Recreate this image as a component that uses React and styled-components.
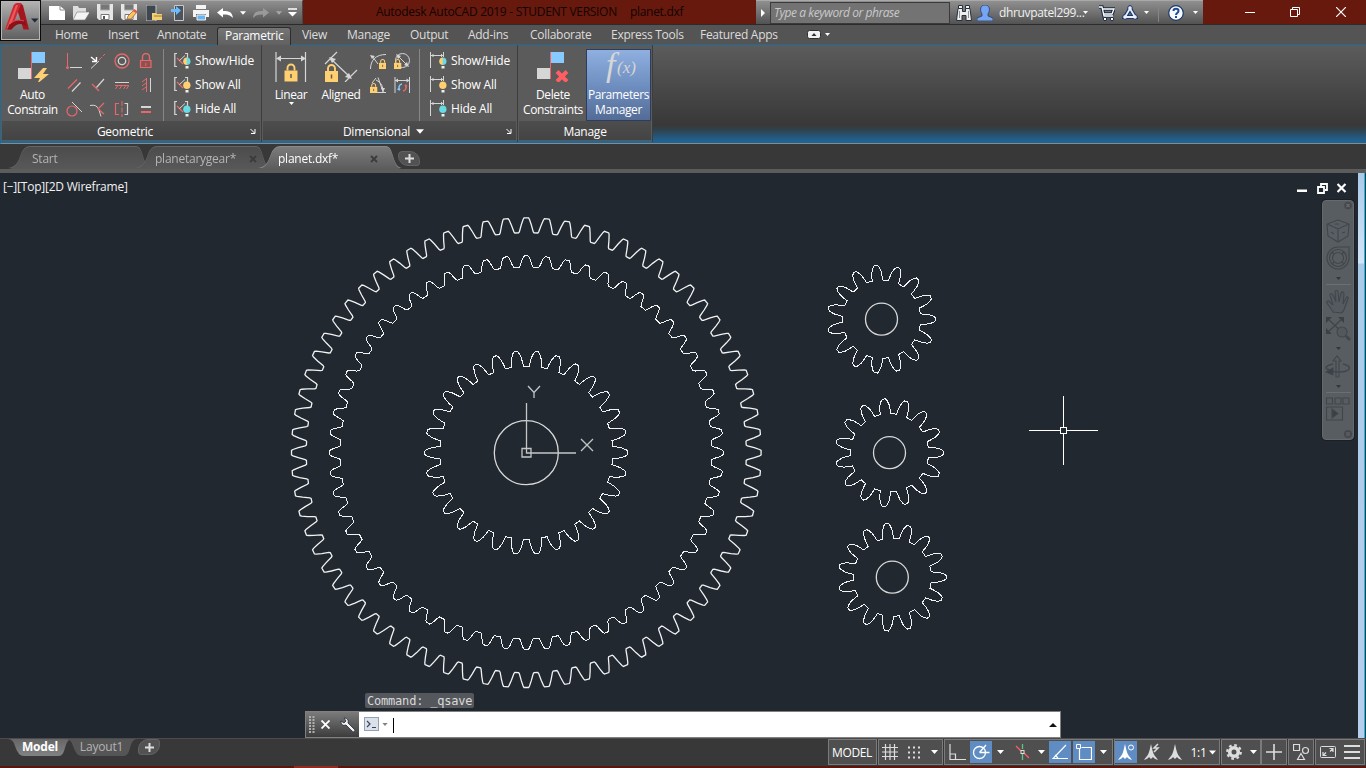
import React from "react";
import styled, { createGlobalStyle, css } from "styled-components";

const Global = createGlobalStyle`
  html, body { margin: 0; padding: 0; background: #383838; }
  * { box-sizing: border-box; }
  body { font-family: "Open Sans", "Noto Sans", sans-serif; font-size: 12px; letter-spacing: -0.35px; color: #f0f0f0; overflow: hidden; }
  svg { display: block; flex: none; }
`;

const Screen = styled.div`
  width: 1366px;
  height: 768px;
  display: flex;
  flex-direction: column;
  background: #383838;
  overflow: hidden;
  white-space: nowrap;
`;

/* ---------- title bar ---------- */
const TitleBar = styled.header`
  height: 25px;
  display: flex;
  background: #68190d;
  border-bottom: 1px solid #2b2b2b;
`;
const steel = css`
  background: linear-gradient(#8f8f8f, #757575 45%, #525252);
  border-top: 1px solid #a9a9a9;
`;
const AppButton = styled.div`
  position: relative;
  z-index: 2;
  width: 41px;
  height: 41px;
  flex: none;
  border: 1px solid #0b0b0b;
  box-shadow: inset 0 0 0 1px #b5b5b5;
  background: linear-gradient(#b4b4b4, #8b8b8b 45%, #5e5e5e);
`;
const QuickAccess = styled.div`
  ${steel}
  width: 262px;
  height: 24px;
  display: flex;
  align-items: center;
  padding-left: 8px;
  border-right: 1px solid #474747;
`;
const Slot = styled.span`
  width: ${(p) => p.$w}px;
  display: flex;
  flex: none;
  align-items: center;
  justify-content: ${(p) => p.$align || "flex-start"};
`;
const Title = styled.div`
  width: 453px;
  padding-left: 73px;
  color: #120403;
  line-height: 23px;
  letter-spacing: -0.29px;
  display: flex;
  gap: 13px;
`;
const InfoCenter = styled.div`
  ${steel}
  width: 447px;
  height: 24px;
  display: flex;
  align-items: center;
`;
const Search = styled.div`
  width: 180px;
  height: 22px;
  flex: none;
  border: 1px solid #3a3a3a;
  background: #737373;
  color: #c9c9c9;
  font-style: italic;
  line-height: 19px;
  padding-left: 3px;
  letter-spacing: -0.45px;
`;
const WindowButtons = styled.div`
  flex: 1;
  display: flex;
  align-items: center;
  padding: 0 0 1px 42px;
`;
const Divider = styled.span`
  width: 1px;
  height: ${(p) => p.$h}px;
  background: #858585;
  flex: none;
`;

/* ---------- ribbon ---------- */
const TabRow = styled.nav`
  height: 20px;
  display: flex;
  background: #545454;
  border-bottom: 1px solid #1f6a96;
  padding-left: 47px;
`;
const RibbonTab = styled.div`
  width: ${(p) => p.$w}px;
  padding-left: 8px;
  line-height: 20px;
  height: 19px;
  color: #dcdcdc;
  flex: none;
  letter-spacing: -0.28px;
  ${(p) =>
    p.$on &&
    css`
      color: #fff;
      margin: 2px 3px 0 7px;
      padding-left: 7px;
      height: 18px;
      line-height: 15px;
      background: linear-gradient(#757575, #606060);
      border: 1px solid #2c2c2c;
      border-bottom: 0;
      border-radius: 3px 3px 0 0;
    `}
`;
const Ribbon = styled.section`
  height: 99px;
  display: flex;
  background: linear-gradient(#5c5c5c, #383838 82%, #2f4350 87%, #1f6394 98%);
  border-bottom: 1px solid #8a8a8a;
  border-left: 1px solid #1f6a96;
`;
const Panel = styled.div`
  width: ${(p) => p.$w}px;
  display: flex;
  flex-direction: column;
  padding-bottom: 1px;
  background: #5b5b5b;
  border-right: 1px solid #3d3d3d;
  border-bottom: 2px solid #1c6a9c;
`;
const PanelBody = styled.div`
  height: 79px;
  display: flex;
  padding-top: 4px;
`;
const PanelTitle = styled.div`
  flex: 1;
  margin: 0 1px;
  padding: 2px ${(p) => (p.$corner ? 12 : 0)}px 0 0;
  display: flex;
  align-items: center;
  justify-content: center;
  position: relative;
  color: #fff;
  background: linear-gradient(#4d4d4d, #444);
  letter-spacing: -0.25px;
`;
const Launcher = styled.span`
  position: absolute;
  right: 4px;
  top: 7px;
`;
const BigButton = styled.div`
  width: ${(p) => p.$w}px;
  height: 72px;
  margin-left: ${(p) => p.$ml || 0}px;
  display: flex;
  flex-direction: column;
  align-items: center;
  color: #fff;
  line-height: 15px;
  text-align: center;
  flex: none;
  ${(p) =>
    p.$on &&
    css`
      background: linear-gradient(#8fb0e0, #6f8fc0 50%, #536b95);
      box-shadow: inset 0 0 0 1px #2c3d60;
    `}
`;
const BigLabel = styled.span`
  margin-top: 5px;
  letter-spacing: -0.38px;
`;
const IconGrid = styled.div`
  display: grid;
  grid-template-columns: repeat(${(p) => p.$cols}, 24px);
  grid-auto-rows: 24px;
  place-items: center;
  align-content: start;
  margin-left: ${(p) => p.$ml}px;
`;
const PanelDivider = styled.div`
  width: 1px;
  height: 72px;
  background: #878787;
  margin: 0 10px 0 ${(p) => p.$ml}px;
`;
const VisibilityRow = styled.div`
  height: 24px;
  display: flex;
  align-items: center;
  gap: 4px;
  color: #fff;
  padding-bottom: 2px;
  letter-spacing: -0.2px;
`;

/* ---------- document tabs ---------- */
const FileTabs = styled.div`
  height: 29px;
  display: flex;
  align-items: flex-end;
  background: #383838;
  border-bottom: 4px solid #5c5c5c;
`;
const FileTab = styled.div`
  position: relative;
  z-index: ${(p) => (p.$on ? 2 : 1)};
  width: ${(p) => p.$w}px;
  height: 22px;
  margin-left: ${(p) => p.$ml}px;
  padding: 1px ${(p) => p.$pr || 10}px 0 ${(p) => p.$pl}px;
  display: flex;
  align-items: center;
  justify-content: space-between;
  flex: none;
  color: ${(p) => (p.$on ? "#fff" : "#b4b4b4")};
  letter-spacing: -0.24px;
  filter: drop-shadow(0 -1px 0 ${(p) => (p.$on ? "#8b8b8b" : "#636363")});
  &::before {
    content: "";
    position: absolute;
    z-index: -1;
    inset: 0;
    background: ${(p) => (p.$on ? "linear-gradient(#7b7b7b, #5c5c5c)" : "linear-gradient(#4c4c4c, #585858)")};
    clip-path: path("${(p) =>
      `M0 22 C8 21 10 16 13 8 Q16 0 22 0 L${p.$w - 16} 0 Q${p.$w - 12} 0 ${p.$w - 10} 7 C${p.$w - 7} 16 ${p.$w - 6} 21 ${p.$w} 22 Z`}");
  }
`;
const PlusTab = styled.div`
  width: 22px;
  height: ${(p) => p.$h}px;
  margin: ${(p) => p.$m};
  display: grid;
  place-items: center;
  flex: none;
  background: #525252;
  border: 1px solid #626262;
  border-radius: ${(p) => p.$r};
`;

/* ---------- drawing area ---------- */
const Workspace = styled.main`
  position: relative;
  height: 565px;
  background: #212830;
`;
const Drawing = styled.svg`
  position: absolute;
  left: 0;
  top: 0;
`;
const ViewLabel = styled.div`
  position: absolute;
  left: 3px;
  top: 6px;
  line-height: 16px;
  color: #f2f2f2;
  letter-spacing: -0.22px;
`;
const ViewButtons = styled.div`
  position: absolute;
  left: 1297px;
  top: 10px;
  display: flex;
  gap: 9px;
`;
const NavBar = styled.div`
  position: absolute;
  left: 1322px;
  top: 27px;
  width: 32px;
  height: 240px;
  border-radius: 4px;
  background: #585d61;
  border: 1px solid #666a6e;
  box-shadow: 0 0 0 1px #1a1f25;
`;
const EdgeStrip = styled.div`
  position: absolute;
  left: 1358px;
  top: 0;
  width: 8px;
  height: 565px;
  background: linear-gradient(#a9cbea, #d3e5f6 90px, #a9cbea 91px, #b6cfec);
  border-right: 1px solid #2b3a42;
  box-shadow: inset -1px 0 0 #19b9e8;
`;
const History = styled.div`
  position: absolute;
  left: 365px;
  top: 520px;
  width: 109px;
  height: 15px;
  border-radius: 2px;
  background: #54585c;
  color: #dadada;
  font: 12px/16px "DejaVu Sans Mono", monospace;
  letter-spacing: -0.2px;
  padding-left: 2px;
`;
const CommandBar = styled.div`
  position: absolute;
  left: 305px;
  top: 538px;
  width: 756px;
  height: 27px;
  display: flex;
  border: 1px solid #808080;
`;
const CommandHandle = styled.div`
  width: 53px;
  display: flex;
  align-items: center;
  padding-left: 3px;
  background: linear-gradient(#7b7b7b, #3c3c3c);
`;
const CommandInput = styled.div`
  flex: 1;
  display: flex;
  align-items: center;
  background: #fff;
  padding: 0 3px 0 5px;
`;
const Caret = styled.span`
  width: 1px;
  height: 15px;
  margin: 2px auto 0 5px;
  background: #000;
`;

/* ---------- status bar ---------- */
const StatusBar = styled.footer`
  height: 28px;
  display: flex;
  background: #383838;
  border-top: 1px solid #4c4c4c;
`;
const LayoutTabs = styled.div`
  width: 828px;
  display: flex;
  align-items: flex-start;
`;
const LayoutTab = styled.div`
  position: relative;
  z-index: 1;
  width: ${(p) => p.$w}px;
  height: 17px;
  margin-left: ${(p) => p.$ml}px;
  line-height: 16px;
  text-align: center;
  color: ${(p) => (p.$on ? "#fff" : "#b4b4b4")};
  font-weight: ${(p) => (p.$on ? 700 : 400)};
  letter-spacing: -0.2px;
  &::before {
    content: "";
    position: absolute;
    z-index: -1;
    inset: 0;
    background: ${(p) => (p.$on ? "linear-gradient(#666, #828282)" : "#555")};
    clip-path: path("${(p) => `M0 0 Q5 0 7 7 Q10 17 16 17 L${p.$w - 13} 17 Q${p.$w - 9} 17 ${p.$w - 7} 9 Q${p.$w - 5} 0 ${p.$w} 0 Z`}");
  }
`;
const Group = styled.div`
  width: ${(p) => p.$w}px;
  height: 26px;
  display: flex;
  align-items: center;
  flex: none;
  margin-right: ${(p) => p.$mr ?? 1}px;
  background: #4f4f4f;
  border: 1px solid #7b7b7b;
  color: #fff;
  padding-left: ${(p) => p.$pl || 0}px;
`;
const Toggle = styled.span`
  width: ${(p) => p.$w || 22}px;
  height: 22px;
  margin-left: ${(p) => p.$ml || 0}px;
  display: grid;
  place-items: center;
  flex: none;
  background: ${(p) => (p.$on ? "#5f8dc3" : "transparent")};
`;
const Taskbar = styled.div`
  height: 2px;
  background: linear-gradient(90deg, #5a150c 294px, #932a1e 294px, #932a1e 338px, #5a150c 338px);
`;

/* ---------- small glyphs ---------- */
const Arrow = ({ c = "#fff", w = 7, h = 4 }) => (
  <svg width={w} height={h} viewBox="0 0 7 4"><path d="M0 0h7L3.5 4z" fill={c} /></svg>
);
const Svg = ({ w = 16, h = 16, children, ...r }) => (
  <svg width={w} height={h} viewBox={`0 0 ${w} ${h}`} fill="none" {...r}>{children}</svg>
);
const R = "#e8686a";
const W = "#d6d6d6";
const Y = "#ffcf70";
const B = "#86caff";
const C = "#66dbe4";

const Lock = ({ x, y, s = 1, c = Y }) => (
  <g transform={`translate(${x} ${y}) scale(${s})`}>
    <path d="M3 6V3.500a3.500 3.500 0 0 1 7 0V6" stroke={c} strokeWidth="1.900" fill="none" />
    <path d="M0 6h13v11H0z" fill={c} />
    <path d="M6.500 9.500v4" stroke="#5b5b5b" strokeWidth="1.500" />
  </g>
);

const AutoConstrainIcon = () => (
  <Svg w={34} h={33}>
    <path d="M16 3h13v11H16z" fill={B} /><path d="M2 19h13v11H2z" fill={W} />
    <path d="M15.500 3v27" stroke={R} />
    <path d="M27 19l-9 10h6l-3 6 12-10h-6l4-6z" fill="#ffd073" />
  </Svg>
);
const DeleteConstraintsIcon = () => (
  <Svg w={34} h={33}>
    <path d="M15 3h13v11H15z" fill={B} /><path d="M1 19h13v11H1z" fill={W} />
    <path d="M14.500 3v27" stroke={R} />
    <path d="M21 22.500l10 10M31 22.500l-10 10" stroke="#ff5e62" strokeWidth="4" />
  </Svg>
);

const geometricIcons = [
  <><path d="M1.500 0v13" stroke={R} /><circle cx="1.500" cy="14.500" r="1.500" fill={R} /><path d="M4 14.500h12" stroke={W} /></>,
  <><path d="M1 15.500L9 8" stroke={W} /><path d="M9 7l6-6" stroke={R} strokeDasharray="4 1.500" /><path d="M1 4l5 4M6.500 4v4.500H2" stroke="#fff" strokeWidth="1.400" /></>,
  <><circle cx="8" cy="8" r="7" stroke={R} strokeWidth="1.300" /><circle cx="8" cy="8" r="3.700" stroke={W} strokeWidth="1.300" /></>,
  <><path d="M4.500 7V4a3.500 3.500 0 0 1 7 0v3" stroke={R} strokeWidth="1.400" /><path d="M2.500 7.500h10.500v7H2.500z" stroke={R} fill="#8b5153" strokeWidth="1.200" /><path d="M7.800 10v3" stroke={R} /></>,
  <><path d="M2 11.500L11 2.500" stroke={R} strokeWidth="1.200" /><path d="M6 14.500L14.500 5.500" stroke={W} strokeWidth="1.200" /></>,
  <><path d="M2 7l7 7" stroke={R} strokeWidth="1.300" /><path d="M6.500 10.500L14 2" stroke={W} strokeWidth="1.200" /></>,
  <><path d="M1 5.500h14" stroke={W} /><path d="M1 8.500h14M3.500 9l-2 3M7.500 9l-2 3M11.500 9l-2 3M14.500 9l-2 3" stroke={R} /></>,
  <><path d="M8.500 1v14M8 2L4 5M8 6L4 9M8 10l-4 3" stroke={R} /><path d="M12.500 1v14" stroke={W} /></>,
  <><circle cx="6" cy="10" r="5" stroke={R} strokeWidth="1.200" /><path d="M6 1l10 10" stroke={W} /></>,
  <><path d="M0 4.500Q7 3 9 9l2 6.500" stroke={W} /><path d="M14 2L8 8M8 8l6 5" stroke={R} strokeWidth="1.200" /></>,
  <><path d="M5 2.500H1.500v11H5" stroke={R} strokeWidth="1.200" /><path d="M8 0v16" stroke={R} strokeDasharray="5 1.500" /><path d="M10.500 2.500h3v11h-3" stroke={W} strokeWidth="1.200" /></>,
  <><path d="M3 6h10" stroke={W} strokeWidth="2" /><path d="M3 11h10" stroke={R} strokeWidth="2" /></>,
];

const Bulb = ({ left, right }) => (
  <>
    <path d="M13 5.500a3.800 3.800 0 0 0 0 7.600z" fill={left} />
    <path d="M12.700 5.500a3.800 3.800 0 0 1 0 7.600z" fill={right} />
    <path d="M11.500 14h3v2.500h-3z" fill="#eee" />
  </>
);
const bulbs = [[Y, C], [Y, Y], [C, C]];
const GeoVisIcon = ({ i }) => (
  <Svg w={17} h={17}>
    <path d="M3 1.500H.8v13H3M11 1.500h2.500v5" stroke={W} strokeWidth="1.200" />
    <path d="M3 6l6 6" stroke={R} strokeWidth="1.200" /><path d="M5.500 8.500L11 3.500" stroke={W} />
    <Bulb left={bulbs[i][0]} right={bulbs[i][1]} />
  </Svg>
);
const DimVisIcon = ({ i }) => (
  <Svg w={17} h={17}>
    <path d="M.5 0v16M13.500 0v5M1 3.500h12M3 2v3M11.500 2v3" stroke={W} />
    <Bulb left={bulbs[i][0]} right={bulbs[i][1]} />
  </Svg>
);

const LinearIcon = () => (
  <Svg w={32} h={33}>
    <path d="M1 3v30M30.500 3v30M2 9.500h28" stroke={W} strokeWidth="1.200" />
    <path d="M1 9.500l5-3v6zM31 9.500l-5-3v6z" fill={W} />
    <Lock x={9.500} y={15.500} />
  </Svg>
);
const AlignedIcon = () => (
  <Svg w={34} h={33}>
    <path d="M1 15L13 3M21 33l12-12M7 10l19 18" stroke={W} strokeWidth="1.200" />
    <path d="M5 8l7 2-4 4zM28 30l-7-2 4-4z" fill={W} />
    <Lock x={1} y={16} />
  </Svg>
);
const dimensionIcons = [
  <><path d="M.5 16C.5 7 6 1.500 16 1.500M2 3l6 8" stroke={W} /><path d="M0 2l5 1-3 3z" fill={W} /><Lock x={9} y={6.500} s={0.56} /></>,
  <><circle cx="8.500" cy="7.500" r="7" stroke={W} /><path d="M3 2l11 11" stroke={W} /><path d="M2 1l5 2-3 3zM15 14l-5-2 3-3z" fill={W} /><Lock x={0} y={6.500} s={0.56} /></>,
  <><path d="M2 6l4-5M6 3c6 3 7 7 7 12M4 15.500h12M8 .500l5 14" stroke={W} /><path d="M13 15l-2-4h4z" fill={W} /><Lock x={0} y={6.500} s={0.56} /></>,
  <><path d="M1 0v16M15.500 0v16M1 3.500h14" stroke={W} /><path d="M1 3.500l3-2v4zM15.500 3.500l-3-2v4z" fill={W} /><path d="M8 7a3.500 3.500 0 0 0-2 6M6 13l-2.500-1" stroke={B} strokeWidth="1.500" /><path d="M9 14a3.500 3.500 0 0 0 2-6M11 8l2 1" stroke={R} strokeWidth="1.500" /></>,
];
const FxIcon = () => (
  <Svg w={38} h={33} overflow="visible">
    <text x="6" y="27" fontFamily="Liberation Serif, serif" fontStyle="italic" fontSize="34" fill={W} letterSpacing="0">f</text>
    <text x="17" y="24" fontFamily="Liberation Serif, serif" fontStyle="italic" fontSize="17" fill={W} letterSpacing="0">(x)</text>
  </Svg>
);
const CornerIcon = () => (
  <Svg w={6} h={6}><path d="M.5 1l4 4M5 1v4.500H1" stroke="#fff" /></Svg>
);
const PlusGlyph = () => <Svg w={9} h={9}><path d="M4.500 0v9M0 4.500h9" stroke="#ddd" strokeWidth="2" /></Svg>;
const CloseGlyph = () => <Svg w={8} h={8}><path d="M1 1l6 6M7 1L1 7" stroke="#3b3b3b" strokeWidth="1.800" /></Svg>;

const AppLogo = () => (
  <Svg w={39} h={39}>
    <path d="M15 2.500h5l2 2 6 24h-5.500L16 8z" fill="#a3161f" />
    <path d="M4 28.500L12.500 4.500Q13.500 2 16 2h4.500L10 28.500z" fill="#cf2a33" />
    <path d="M6 27L15 4h2L9 27z" fill="#ea5a5c" />
    <path d="M8 24c4-5 10-6 16-4l1.500 5c-5-3-10-3-15 3.500H6.500z" fill="#8e1019" />
    <path d="M9 23c4-4 9-4.500 14-3" stroke="#dd4a4e" />
    <path d="M30 17.500h7.500l-3.750 4z" fill="#1e2a3c" />
  </Svg>
);

const Floppy = ({ pencil }) => (
  <Svg w={17} h={17}>
    <path d="M0 0h16v16H2l-2-2z" fill="#e6e6e6" /><path d="M3.500 0h9v6h-9z" fill="#777" stroke="#aaa" />
    <path d="M4 10.500h8v5H4z" fill="#fff" stroke="#777" />
    {pencil ? <path d="M6 15l1-3 6-6 3 2-6 7z" fill="#ffc35d" stroke="#8a5a3a" strokeWidth=".7" /> : <path d="M6 12h2v3H6z" fill="#555" />}
    {pencil && <path d="M12.500 6l3 2" stroke="#e4574f" strokeWidth="2.500" />}
  </Svg>
);
const quickIcons = [
  [24, <Svg><path d="M0 1h11l5 4v10H0z" fill="#fff" /><path d="M11 1v4h5" stroke="#888" /></Svg>],
  [24, <Svg><path d="M0 15V1h5l1 2h7v4H5z" fill="#dedede" /><path d="M4 7h13l-5 8H0z" fill="#f4f4f4" stroke="#777" strokeWidth=".6" /></Svg>],
  [24, <Floppy />],
  [25, <Floppy pencil />],
  [25, <Svg><path d="M0 0h10v16H0z" fill="#3e4650" stroke="#c8c8c8" /><path d="M6 8h4l1 1h5v6H6z" fill="#f3cf74" /><path d="M8 11h8" stroke="#a07c32" /></Svg>],
  [22, <Svg><path d="M3.500.5h9v15h-9z" fill="#4b535d" stroke="#c8c8c8" /><path d="M0 4h5V1l5 4.500L5 10V7H0z" fill="#6dbbff" /></Svg>],
  [24, <Svg><path d="M3 0h10v4H3zM0 5h16v7h-3V9H3v3H0z" fill="#f4f4f4" /><path d="M4 10h8.500v5H4z" fill="#65b5f4" stroke="#eee" /></Svg>],
  [23, <Svg w={17}><path d="M0 7.500L6 3v3c7 0 9 1 10 7-3-3-5-3.500-10-3.500v3z" fill="#fff" /></Svg>],
  [13, <Arrow w={6} />],
  [23, <Svg w={17}><path d="M16 7.500L10 3v3C3 6 1 7 0 13c3-3 5-3.500 10-3.500v3z" fill="#9a9a9a" /></Svg>],
  [12, <Arrow w={6} c="#aaa" />],
  [14, <Svg w={9} h={9}><path d="M0 1h9" stroke="#fff" strokeWidth="1.500" /><path d="M0 4h9L4.500 8.500z" fill="#fff" /></Svg>],
];

/* ---------- gears ---------- */
function gearPath(cx, cy, teeth, profile) {
  const pts = [];
  for (let i = 0; i < teeth; i++) {
    const a = (i * 2 * Math.PI) / teeth;
    profile.forEach(([r, half]) => pts.push([r, a - half / r]));
    [...profile].reverse().forEach(([r, half]) => pts.push([r, a + half / r]));
  }
  return "M" + pts.map(([r, a]) => `${(cx + r * Math.cos(a)).toFixed(2)} ${(cy + r * Math.sin(a)).toFixed(2)}`).join("L") + "Z";
}
const outerProfile = [[220.000, 7.700], [221.200, 6.900], [228, 5], [233.300, 3.200], [234.800, 2.300]];
const innerProfile = [[185.800, 6.900], [188.300, 5.600], [192.800, 4.200], [195.600, 2.900], [196.800, 1.800]];
const sunProfile = [[86.500, 6.200], [90.500, 5.700], [95, 4.900], [99.500, 3.200], [101.500, 1.700]];
const planetProfile = [[39.200, 5.300], [43.500, 5.100], [48, 4.600], [51.800, 3.200], [54, 1.600]];
const planets = [[881.500, 319.200], [889.500, 452.700], [892.300, 577.200]];

const GearDrawing = () => (
  <Drawing width="1358" height="565" viewBox="0 173 1358 565" fill="none" stroke="#f2f2f2" strokeWidth="1">
    <path d={gearPath(526.300, 452.700, 72, outerProfile)} strokeWidth="1.300" />
    <g shapeRendering="crispEdges">
      <path d={gearPath(526.300, 452.700, 60, innerProfile)} />
      <path d={gearPath(526.300, 452.700, 30, sunProfile)} />
      {planets.map(([x, y]) => <path key={y} d={gearPath(x, y, 15, planetProfile)} />)}
    </g>
    {planets.map(([x, y]) => <circle key={y} cx={x} cy={y} r="16" strokeWidth="1.300" stroke="#d8d8d8" />)}
    <circle cx="526.300" cy="452.700" r="32" stroke="#d8d8d8" strokeWidth="1.300" />
    <g stroke="#c4c6c8" strokeWidth="1.300">
      <path d="M526.500 403v50h49.500M522 448.500h9v8.500h-9z" />
      <path d="M528 386l6 6.500 6-6.500M534 392.500v5.500M581 439l12 12M593 439l-12 12" />
    </g>
    <path d="M1063.500 396v31M1063.500 434v31M1029 430.500h31M1067 430.500h31M1060.500 427.500h6v6h-6z" stroke="#fff" shapeRendering="crispEdges" />
  </Drawing>
);

const NavIcons = () => (
  <Svg w={30} h={238} stroke="#41464c" strokeWidth="1.100">
    <circle cx="25" cy="4.500" r="3.800" fill="#45494e" stroke="none" /><path d="M23.500 3l3 3M26.500 3l-3 3" stroke="#686c70" />
    <path d="M15 19l11 4-1 12-10 6-10-6-1-12zM4 23l11 5 11-5M15 28v13M12 23h4M8 31l3 2M19 32l3-1" fill="#595e64" />
    <path d="M15 46h11v11a11 11 0 1 1-11-11z" /><circle cx="15" cy="57" r="8.500" /><circle cx="15" cy="57" r="5.500" />
    <path d="M9 51l2 2M21 51l-2 2M9 63l2-2M21 63l-2-2" />
    <path d="M13 76h5l-2.500 3zM13 146h5l-2.500 3zM13 184h5l-2.500 3z" fill="#33383d" stroke="none" />
    <path d="M3 83.500h25M3 191.500h25" stroke="#6b6f73" strokeWidth="1" />
    <path d="M10 111c-2-4-5-7-6-9s1-3 3-1l3 3-3-10c0-2 2-2 3 0l3 7-1-10c0-2 3-2 3 0l1 10 2-9c1-2 3-1 3 1l-1 10 3-6c1-2 3-1 2 1l-3 8c-1 4-2 5-4 6z" fill="#555a61" />
    <path d="M5 118l15 14M20 117L4 132" strokeWidth="1.500" /><path d="M3 116h6l-6 6zM21 116v6l-6-6zM3 133v-6l6 6z" fill="#3b4046" stroke="none" />
    <circle cx="19" cy="131" r="5" fill="#53575e" /><path d="M23 135l4 4" strokeWidth="2.800" />
    <path d="M13 176v-16h-3l4-5 4 5h-2v16z" /><path d="M20 163c10 2 8 8-4 8-7 0-10-2-11-3M10 163c-8 2-8 4-5 6" strokeWidth="1.500" /><path d="M3 171l7-4v7z" fill="#3b4046" />
    <path d="M3.500 197h6v6h-6zM12 197h6v6h-6zM20 197h6v6h-6zM3.500 206h16v13h-16z" /><path d="M9 208v9l6-4.500z" fill="#3b4046" />
    <circle cx="25" cy="233" r="4" fill="#45494e" stroke="none" /><path d="M23 232h4M23 234h4" stroke="#686c70" />
  </Svg>
);

const Annot = ({ c = "#dcdcdc", extra }) => (
  <Svg w={18} h={18}><path d="M8 1c.8 3.500 1.500 7 2.500 9.500 1 2.300 3 4 4.500 6.500-2-.5-3.500-1.200-5-3L8 16l-2-2c-1.500 1.800-3 2.500-5 3 1.500-2.500 3.500-4.200 4.500-6.500C6.500 8 7.200 4.500 8 1z" fill={c} />{extra}</Svg>
);

const tabs = [
  ["Home", 53], ["Insert", 49], ["Annotate", 61], ["Parametric", 74, true], ["View", 45], ["Manage", 63], ["Output", 58],
  ["Add-ins", 62], ["Collaborate", 81], ["Express Tools", 89], ["Featured Apps", 115],
];

export default function App() {
  return (
    <Screen>
      <Global />
      <TitleBar>
        <AppButton><AppLogo /></AppButton>
        <QuickAccess>{quickIcons.map(([w, icon], i) => <Slot key={i} $w={w}>{icon}</Slot>)}</QuickAccess>
        <Title><span>Autodesk AutoCAD 2019 - STUDENT VERSION</span><span>planet.dxf</span></Title>
        <InfoCenter>
          <Slot $w={14} $align="center"><Svg w={4} h={8}><path d="M0 0l4 4-4 4z" fill="#fff" /></Svg></Slot>
          <Search>Type a keyword or phrase</Search>
          <Slot $w={27} $align="center"><Svg><path d="M2 3.500h4.500v3h3v-3H14l1.500 12H10v-5H6v5H.5z" fill="#eee" stroke="#26303c" /><path d="M2.500.500h4v3h-4zM9.500.500h4v3h-4z" fill="#eee" stroke="#26303c" /><path d="M3.500 6v7M12.500 6v7" stroke="#8a929c" /></Svg></Slot>
          <Slot $w={22}><Svg><path d="M5 9C2 4 4 0 8 0s6 4 3 9v2l5 2v3H0v-3l5-2z" fill="#77a5f2" stroke="#1f3f7c" strokeWidth=".8" /></Svg></Slot>
          <Slot $w={84}>dhruvpatel299...</Slot>
          <Slot $w={16}><Arrow w={5} h={3} /></Slot>
          <Slot $w={23}><Svg><path d="M0 2h3l2 9h9M4 4h11l-2 5H5" stroke="#1c2b44" strokeWidth="3.500" /><path d="M0 2h3l2 9h9M4 4h11l-2 5H5" stroke="#fff" strokeWidth="1.300" /><circle cx="6" cy="14" r="1.700" fill="#fff" stroke="#1c2b44" /><circle cx="13" cy="14" r="1.700" fill="#fff" stroke="#1c2b44" /></Svg></Slot>
          <Slot $w={22}><Svg><path d="M8 3.500L13 12H3z" stroke="#1d3769" strokeWidth="4" /><g fill="#e8f0ff" stroke="#1d3769"><circle cx="8" cy="3" r="2.300" /><circle cx="13" cy="12" r="2.300" /><circle cx="3" cy="12" r="2.300" /></g><path d="M8 3.500L13 12H3z" stroke="#e8f0ff" strokeWidth="1.800" /></Svg></Slot>
          <Slot $w={14}><Arrow w={5} h={3} /></Slot>
          <Divider $h={18} />
          <Slot $w={34} $align="center"><Svg><circle cx="8" cy="8" r="7.300" fill="#f7faff" stroke="#1d3769" strokeWidth="1.200" /><path d="M5.500 6c0-3 5-3 5 0 0 2-2.500 2-2.500 4M8 11v2" stroke="#1d4b97" strokeWidth="2" /></Svg></Slot>
          <Slot $w={9}><Arrow w={5} h={3} /></Slot>
        </InfoCenter>
        <WindowButtons>
          <Slot $w={45}><Svg w={10} h={10}><path d="M0 5.500h10" stroke="#fff" /></Svg></Slot>
          <Slot $w={46}><Svg w={10} h={10}><path d="M.5 2.500h7v7h-7zM2.500 2.500v-2h7v7h-2" stroke="#fff" /></Svg></Slot>
          <Slot $w={12}><Svg w={10} h={10}><path d="M0 0l10 10M10 0L0 10" stroke="#fff" strokeWidth="1.200" /></Svg></Slot>
        </WindowButtons>
      </TitleBar>
      <TabRow>
        {tabs.map(([t, w, on]) => <RibbonTab key={t} $w={w} $on={on}>{t}</RibbonTab>)}
        <Slot $w={18}><Svg w={14} h={9}><rect x=".5" y=".5" width="13" height="8" rx="2" fill="#f0f0f0" stroke="#303030" /><path d="M4.500 6L7 3l2.500 3z" fill="#303030" /></Svg></Slot>
        <Slot $w={8}><Arrow w={5} h={3} /></Slot>
      </TabRow>
      <Ribbon>
        <Panel $w={261}>
          <PanelBody>
            <BigButton $w={59} $ml={2}><AutoConstrainIcon /><BigLabel>Auto<br />Constrain</BigLabel></BigButton>
            <IconGrid $cols={4} $ml={0}>{geometricIcons.map((d, i) => <Svg key={i}>{d}</Svg>)}</IconGrid>
            <PanelDivider $ml={5} />
            <div>{["Show/Hide", "Show All", "Hide All"].map((t, i) => <VisibilityRow key={t}><GeoVisIcon i={i} />{t}</VisibilityRow>)}</div>
          </PanelBody>
          <PanelTitle $corner>Geometric<Launcher><CornerIcon /></Launcher></PanelTitle>
        </Panel>
        <Panel $w={256}>
          <PanelBody>
            <BigButton $w={50} $ml={4}><LinearIcon /><BigLabel>Linear</BigLabel><Slot $w={5}><Arrow w={5} h={3} /></Slot></BigButton>
            <BigButton $w={50}><AlignedIcon /><BigLabel>Aligned</BigLabel></BigButton>
            <IconGrid $cols={2} $ml={0}>{dimensionIcons.map((d, i) => <Svg key={i}>{d}</Svg>)}</IconGrid>
            <PanelDivider $ml={5} />
            <div>{["Show/Hide", "Show All", "Hide All"].map((t, i) => <VisibilityRow key={t}><DimVisIcon i={i} />{t}</VisibilityRow>)}</div>
          </PanelBody>
          <PanelTitle $corner>Dimensional<Slot $w={14} $align="flex-end"><Arrow w={8} h={5} /></Slot><Launcher><CornerIcon /></Launcher></PanelTitle>
        </Panel>
        <Panel $w={135}>
          <PanelBody>
            <BigButton $w={66} $ml={2}><DeleteConstraintsIcon /><BigLabel>Delete<br />Constraints</BigLabel></BigButton>
            <BigButton $w={65} $on><FxIcon /><BigLabel>Parameters<br />Manager</BigLabel></BigButton>
          </PanelBody>
          <PanelTitle>Manage</PanelTitle>
        </Panel>
      </Ribbon>
      <FileTabs>
        <FileTab $w={144} $ml={8} $pl={24}>Start</FileTab>
        <FileTab $w={137} $ml={-17} $pl={20} $pr={15}>planetarygear*<CloseGlyph /></FileTab>
        <FileTab $w={144} $ml={-14} $pl={20} $pr={24} $on>planet.dxf*<CloseGlyph /></FileTab>
        <PlusTab $h={15} $m="0 0 3px -4px" $r="4px 10px 3px 10px"><PlusGlyph /></PlusTab>
      </FileTabs>
      <Workspace>
        <GearDrawing />
        <ViewLabel>[−][Top][2D Wireframe]</ViewLabel>
        <ViewButtons>
          <Svg w={11} h={11}><path d="M0 6.500h10v2.500H0z" fill="#fff" /></Svg>
          <Svg w={11} h={11}><path d="M1 4h6v6H1zM4 3V1h6v6H8" stroke="#fff" strokeWidth="1.800" /></Svg>
          <Svg w={11} h={11}><path d="M.5 1l8 8M8.500 1l-8 8" stroke="#fff" strokeWidth="2.200" /></Svg>
        </ViewButtons>
        <NavBar><NavIcons /></NavBar>
        <EdgeStrip />
        <History>Command: _qsave</History>
        <CommandBar>
          <CommandHandle>
            <Slot $w={12}><Svg w={6} h={17}><path d="M1 0v17M4.500 0v17" stroke="#b0b0b0" strokeWidth="2" strokeDasharray="2 1" /></Svg></Slot>
            <Slot $w={17}><Svg w={9} h={9}><path d="M.5.5l8 8M8.500.5l-8 8" stroke="#fff" strokeWidth="1.800" /></Svg></Slot>
            <Slot $w={19} $align="center"><Svg><path d="M4 1l2 3-2 2-3-2c0 4 2 5 5 4l6 6c2 2 4 0 2-2L8 6c1-3-1-5-4-5z" fill="#f4f4f4" stroke="#222b36" strokeWidth=".8" /></Svg></Slot>
          </CommandHandle>
          <CommandInput>
            <Svg w={15} h={15}><rect x=".5" y=".5" width="14" height="13" fill="#dbe1ea" stroke="#93a0b0" /><path d="M3 4l3 3-3 3M8 10.500h4" stroke="#39465a" strokeWidth="1.200" /></Svg>
            <Slot $w={9} $align="flex-end"><Arrow w={6} h={3} c="#808080" /></Slot>
            <Caret />
            <Svg w={8} h={4}><path d="M0 4h8L4 0z" fill="#111" /></Svg>
          </CommandInput>
        </CommandBar>
      </Workspace>
      <StatusBar>
        <LayoutTabs>
          <LayoutTab $w={64} $ml={8} $on>Model</LayoutTab>
          <LayoutTab $w={71} $ml={-6}>Layout1</LayoutTab>
          <PlusTab $h={16} $m="0 0 0 1px" $r="10px 3px 10px 3px"><PlusGlyph /></PlusTab>
        </LayoutTabs>
        <Group $w={49} $pl={3}>MODEL</Group>
        <Group $w={65} $pl={3}>
          <Slot $w={25}><Svg><path d="M3.500 0v16M8 0v16M12.500 0v16M0 3.500h16M0 8h16M0 12.500h16" stroke="#ddd" strokeWidth="1.200" /></Svg></Slot>
          <Slot $w={24}><Svg w={14} h={13}><path d="M1 1.500h13M1 6.500h13M1 11.500h13" stroke="#ddd" strokeWidth="2" strokeDasharray="2 3" /></Svg></Slot>
          <Arrow />
        </Group>
        <Group $w={169} $pl={4}>
          <Slot $w={21}><Svg w={17}><path d="M1 0v15.500h16M1 10h5.500v5.500" stroke="#ddd" strokeWidth="1.200" /></Svg></Slot>
          <Toggle $on><Svg w={18}><circle cx="7.500" cy="8.500" r="6" stroke="#fff" strokeWidth="1.300" /><path d="M7.500 8.500h10M7.500 8.500L14 1" stroke="#fff" strokeWidth="1.300" /></Svg></Toggle>
          <Slot $w={17} $align="center"><Arrow /></Slot>
          <Slot $w={26} $align="center"><Svg w={15}><path d="M7.500 0v5M7.500 10v6" stroke="#5bc580" strokeWidth="1.300" /><path d="M1 2l5 5M9 9l5 5" stroke="#ff5c5f" strokeWidth="1.300" /><rect x="6" y="6.500" width="3" height="3" stroke="#ddd" /></Svg></Slot>
          <Slot $w={13} $align="center"><Arrow /></Slot>
          <Toggle $on $ml={1}><Svg><path d="M14 1L1 14.500h15M3 11l3 3" stroke="#fff" strokeWidth="1.200" /></Svg></Toggle>
          <Toggle $on $ml={2}><Svg><path d="M3.500 4.500v11h12v-12h-10" stroke="#fff" strokeWidth="1.200" /><path d="M.5.500h4v4h-4z" fill="#5f8dc3" stroke="#fff" /></Svg></Toggle>
          <Slot $w={17} $align="center"><Arrow /></Slot>
        </Group>
        <Group $w={106} $pl={0}>
          <Toggle $on><Annot c="#fff" extra={<circle cx="14" cy="4.500" r="2.500" stroke="#fff" />} /></Toggle>
          <Toggle $ml={3} $w={24}><Annot extra={<path d="M15 1l-4 4h4l-4 4" stroke="#ddd" strokeWidth="1.500" />} /></Toggle>
          <Toggle $w={24}><Annot /></Toggle>
          <Slot $w={21} $align="center">1:1</Slot>
          <Arrow w={7} h={5} />
        </Group>
        <Group $w={40} $pl={4} $mr={0}>
          <Slot $w={24}><Svg><circle cx="8" cy="8" r="4.300" stroke="#ddd" strokeWidth="3.600" /><circle cx="8" cy="8" r="6.800" stroke="#ddd" strokeWidth="2.200" strokeDasharray="2.700 2.640" /></Svg></Slot>
          <Arrow />
        </Group>
        <Group $w={26} $pl={4}><Svg><path d="M8 0v16M0 8h16" stroke="#ddd" strokeWidth="1.600" /></Svg></Group>
        <Group $w={26} $pl={4}><Svg><path d="M.5.500h6v6h-6zM8 9.500l3.500 6h-7z" stroke="#ddd" strokeWidth="1.200" /><circle cx="12.500" cy="6.500" r="3" stroke="#ddd" strokeWidth="1.200" /></Svg></Group>
        <Group $w={50} $pl={4} $mr={0}>
          <Slot $w={24}><Svg><rect x=".5" y="2.500" width="15" height="11" rx="1" stroke="#ddd" /><path d="M9.500 4.500H13V8M6.500 11.500H3V8M13 4.500l-3 3M3 11.500l3-3" stroke="#ddd" strokeWidth="1.200" /></Svg></Slot>
          <Svg><path d="M0 2h16M0 8h16M0 14h16" stroke="#ddd" strokeWidth="1.800" /></Svg>
        </Group>
      </StatusBar>
      <Taskbar />
    </Screen>
  );
}
